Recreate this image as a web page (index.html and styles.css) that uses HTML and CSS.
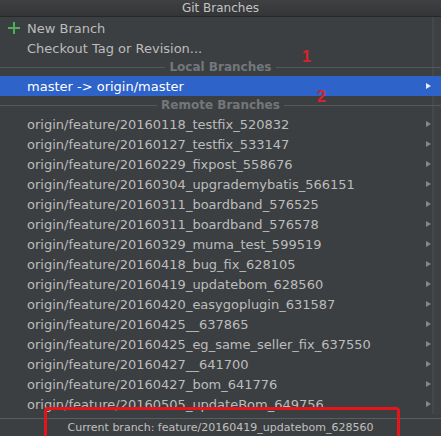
FILE: index.html
```html
<!DOCTYPE html>
<html>
<head>
<meta charset="utf-8">
<link rel="stylesheet" href="styles.css">
</head>
<body>
<div class="popup">
  <div class="title">Git Branches</div>
  <div class="list">
    <div class="row action"><span class="plus"><svg width="12" height="12" viewBox="0 0 12 12"><path d="M6 0V12M0 6H12" stroke="#4fae5a" stroke-width="2"/></svg></span><span class="label">New Branch</span></div>
    <div class="row action"><span class="label">Checkout Tag or Revision...</span></div>
    <div class="sep"><span>Local Branches</span></div>
    <div class="row selected"><span class="label">master -&gt; origin/master</span><span class="arrow"></span></div>
    <div class="sep"><span>Remote Branches</span></div>
    <div class="row"><span class="label">origin/feature/20160118_testfix_520832</span><span class="arrow"></span></div>
    <div class="row"><span class="label">origin/feature/20160127_testfix_533147</span><span class="arrow"></span></div>
    <div class="row"><span class="label">origin/feature/20160229_fixpost_558676</span><span class="arrow"></span></div>
    <div class="row"><span class="label">origin/feature/20160304_upgrademybatis_566151</span><span class="arrow"></span></div>
    <div class="row"><span class="label">origin/feature/20160311_boardband_576525</span><span class="arrow"></span></div>
    <div class="row"><span class="label">origin/feature/20160311_boardband_576578</span><span class="arrow"></span></div>
    <div class="row"><span class="label">origin/feature/20160329_muma_test_599519</span><span class="arrow"></span></div>
    <div class="row"><span class="label">origin/feature/20160418_bug_fix_628105</span><span class="arrow"></span></div>
    <div class="row"><span class="label">origin/feature/20160419_updatebom_628560</span><span class="arrow"></span></div>
    <div class="row"><span class="label">origin/feature/20160420_easygoplugin_631587</span><span class="arrow"></span></div>
    <div class="row"><span class="label">origin/feature/20160425__637865</span><span class="arrow"></span></div>
    <div class="row"><span class="label">origin/feature/20160425_eg_same_seller_fix_637550</span><span class="arrow"></span></div>
    <div class="row"><span class="label">origin/feature/20160427__641700</span><span class="arrow"></span></div>
    <div class="row"><span class="label">origin/feature/20160427_bom_641776</span><span class="arrow"></span></div>
    <div class="row"><span class="label">origin/feature/20160505_updateBom_649756</span><span class="arrow"></span></div>
  </div>
  <div class="status">Current branch: feature/20160419_updatebom_628560</div>
  <div class="mark mark1">1</div>
  <div class="mark mark2">2</div>
  <div class="redbox"></div>
</div>
</body>
</html>
```
FILE: styles.css
```css
html, body {
  margin: 0;
  padding: 0;
  background: #3c3f41;
}
.popup {
  position: relative;
  width: 441px;
  height: 436px;
  overflow: hidden;
  background: #3c3f41;
  font-family: "DejaVu Sans", "Noto Sans", sans-serif;
  color: #bcbcbc;
}
.title {
  height: 16px;
  line-height: 16px;
  text-align: center;
  font-size: 12px;
  color: #c4c4c4;
  background: linear-gradient(#3f4042, #343537);
  border-bottom: 1px solid #262728;
}
.list {
  padding-top: 1px;
  background: linear-gradient(to right, transparent 432px, #45484a 432px, #45484a 434px, #3e4143 434px);
}
.row {
  height: 20px;
  display: flex;
  align-items: center;
  position: relative;
  font-size: 13px;
}
.row .label {
  padding-left: 27px;
  flex: 1;
  white-space: nowrap;
}
.row.action .plus {
  position: absolute;
  left: 8px;
  top: 4px;
  width: 12px;
  height: 12px;
}
.row.action .plus svg {
  display: block;
}
.row .arrow {
  width: 0;
  height: 0;
  border-top: 3.5px solid transparent;
  border-bottom: 3.5px solid transparent;
  border-left: 5px solid #85888b;
  margin-right: 10px;
}
.row.selected {
  background: #2e63c9;
  color: #ffffff;
}
.row.selected .arrow {
  border-left-color: #e8eefc;
}
.sep {
  height: 18px;
  display: flex;
  align-items: center;
  justify-content: center;
  position: relative;
  font-size: 12px;
  font-weight: bold;
  color: #74777a;
}
.sep::before {
  content: "";
  position: absolute;
  left: 0;
  right: 0;
  top: 9px;
  border-top: 1px solid #55585b;
}
.sep span {
  position: relative;
  background: #3c3f41;
  padding: 0 4px;
}
.status {
  margin-top: 4px;
  border-top: 1px solid #5a5d60;
  height: 17px;
  line-height: 17px;
  text-align: center;
  font-size: 11px;
  color: #c0c0c0;
}
.mark {
  position: absolute;
  color: #d8232a;
  font-family: "Liberation Sans", sans-serif;
  font-size: 16px;
  font-weight: bold;
}
.mark1 { left: 302px; top: 48px; }
.mark2 { left: 317px; top: 88px; }
.redbox {
  position: absolute;
  left: 44px;
  top: 407px;
  width: 350px;
  height: 40px;
  border: 3px solid #e4161b;
  border-radius: 4px;
}
```
